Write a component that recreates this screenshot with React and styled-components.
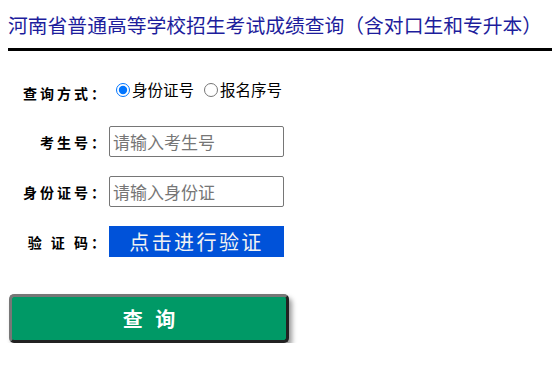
import React from "react";
import styled, { createGlobalStyle } from "styled-components";

const GlobalStyle = createGlobalStyle`
  html, body {
    margin: 0;
    padding: 0;
    background: #fff;
    overflow: hidden;
  }
  body {
    font-family: "Noto Sans CJK SC", "Noto Sans", sans-serif;
  }
`;

const Page = styled.div`
  padding-left: 8px;
`;

const Header = styled.div`
  padding: 11px 0 10px;
  border-bottom: 3px solid #000;
`;

const Title = styled.h1`
  margin: 0;
  font-size: 19.8px;
  line-height: 27px;
  font-weight: normal;
  color: #1d1d9c;
  white-space: nowrap;
`;

const Form = styled.form`
  display: flex;
  flex-direction: column;
  gap: 19px;
  padding-top: 25px;
`;

const Row = styled.div`
  display: flex;
  align-items: ${(p) => (p.$top ? "flex-start" : "center")};
  height: 31px;
`;

const Label = styled.label`
  width: 100px;
  margin-right: 1px;
  text-align: right;
  font-size: 14px;
  font-weight: bold;
  letter-spacing: 3px;
  color: #000;
  white-space: pre;
  align-self: center;
  padding-top: ${(p) => (p.$shift ? "2px" : "0")};
`;

const RadioGroup = styled.div`
  display: flex;
  align-items: center;
  padding-top: 5px;
  font-size: 15.5px;
  line-height: 17px;
  color: #000;
`;

const Radio = styled.input.attrs({ type: "radio" })`
  width: 14px;
  height: 14px;
  margin: 0 2px 0 ${(p) => (p.$first ? "7px" : "10px")};
  accent-color: #0075ff;
`;

const TextInput = styled.input`
  box-sizing: border-box;
  width: 175px;
  height: 31px;
  padding: 0 3px;
  border: 1px solid #767676;
  border-radius: 2px;
  font-family: inherit;
  font-size: 17px;
  color: #000;
  outline: none;

  &::placeholder {
    color: #767676;
  }
`;

const VerifyButton = styled.button`
  box-sizing: border-box;
  width: 175px;
  height: 31px;
  padding: 0;
  border: none;
  background: #0052d9;
  color: #f2f2f2;
  font-family: inherit;
  font-size: 20px;
  letter-spacing: 2.4px;
  cursor: pointer;
`;

const SubmitButton = styled.button`
  box-sizing: border-box;
  width: 280px;
  height: 49px;
  margin: 18px 0 0 1px;
  border: 3px solid;
  border-color: #777 #222 #222 #777;
  border-radius: 5px;
  background: #009966;
  color: #fff;
  font-family: inherit;
  font-size: 20px;
  font-weight: bold;
  letter-spacing: 4px;
  text-indent: 4px;
  white-space: pre;
  box-shadow: 3px 4px 5px rgba(0, 0, 0, 0.4);
  cursor: pointer;
`;

export default function App() {
  return (
    <Page>
      <GlobalStyle />
      <Header>
        <Title>河南省普通高等学校招生考试成绩查询（含对口生和专升本）</Title>
      </Header>
      <Form onSubmit={(e) => e.preventDefault()}>
        <Row $top>
          <Label $shift>查询方式：</Label>
          <RadioGroup>
            <Radio $first name="mode" id="m1" defaultChecked />
            <label htmlFor="m1">身份证号</label>
            <Radio name="mode" id="m2" />
            <label htmlFor="m2">报名序号</label>
          </RadioGroup>
        </Row>
        <Row>
          <Label>考生号：</Label>
          <TextInput type="text" placeholder="请输入考生号" />
        </Row>
        <Row>
          <Label>身份证号：</Label>
          <TextInput type="text" placeholder="请输入身份证" />
        </Row>
        <Row>
          <Label>验 证 码：</Label>
          <VerifyButton type="button">点击进行验证</VerifyButton>
        </Row>
        <SubmitButton type="submit">查 询</SubmitButton>
      </Form>
    </Page>
  );
}
